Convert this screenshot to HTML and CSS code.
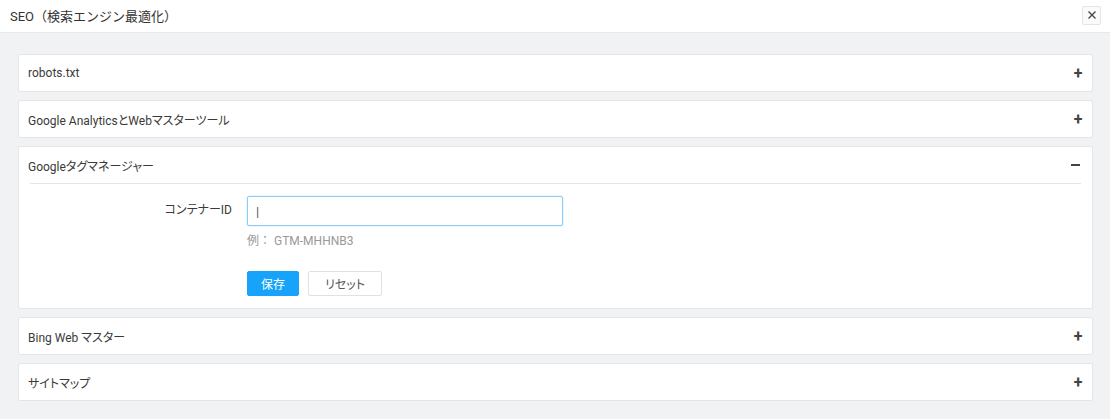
FILE: index.html
```html
<!DOCTYPE html>
<html>
<head>
  <title>SEO</title>
  <link rel="stylesheet" href="styles.css">
</head>
<body>

<div class="modal">
  <div class="modal-head">
    <span class="modal-title">SEO（検索エンジン最適化）</span>
    <button class="close-btn">
      <svg width="10" height="10" viewBox="0 0 10 10"><path d="M1.5 1.5L8.5 8.5M8.5 1.5L1.5 8.5" stroke="#444" stroke-width="1.3"/></svg>
    </button>
  </div>

  <div class="modal-body">
    <div class="panel">
      <div class="panel-head"><span>robots.txt</span><span class="toggle">+</span></div>
    </div>

    <div class="panel">
      <div class="panel-head"><span>Google AnalyticsとWebマスターツール</span><span class="toggle">+</span></div>
    </div>

    <div class="panel open">
      <div class="panel-head"><span>Googleタグマネージャー</span><span class="toggle minus"></span></div>
      <div class="panel-content">
        <div class="form-row">
          <label class="form-label">コンテナーID</label>
          <div class="form-field">
            <input type="text" class="text-input" value="|">
            <div class="hint">例： GTM-MHHNB3</div>
          </div>
        </div>
        <div class="actions">
          <button class="btn btn-primary">保存</button>
          <button class="btn btn-default">リセット</button>
        </div>
      </div>
    </div>

    <div class="panel">
      <div class="panel-head"><span>Bing Web マスター</span><span class="toggle">+</span></div>
    </div>

    <div class="panel">
      <div class="panel-head"><span>サイトマップ</span><span class="toggle">+</span></div>
    </div>
  </div>
</div>

</body>
</html>
```

FILE: styles.css
```css
body {
  margin: 0;
  background: #fff;
  color: #3a3a3a;
  font-family: Roboto, "Noto Sans CJK JP", sans-serif;
  font-size: 12px;
  font-feature-settings: "palt";
}

.modal {
  width: 1110px;
  height: 419px;
  display: flex;
  flex-direction: column;
}

.modal-head {
  height: 32px;
  display: flex;
  align-items: center;
  justify-content: space-between;
  padding: 0 9px 0 10px;
  border-bottom: 1px solid #e6e8eb;
}

.modal-title {
  font-size: 13px;
  color: #333;
  margin-top: -1px;
  font-feature-settings: normal;
}

.close-btn {
  width: 19px;
  height: 19px;
  padding: 0;
  border: 1px solid #e3e5e8;
  background: #fafafa;
  border-radius: 2px;
  display: flex;
  align-items: center;
  justify-content: center;
  margin-top: -2px;
}

.modal-body {
  flex: 1;
  background: #f1f2f4;
  padding: 21px 17px 0 18px;
  display: flex;
  flex-direction: column;
  gap: 8px;
}

.panel {
  background: #fff;
  border: 1px solid #e3e5e8;
  border-radius: 2px;
}

.panel-head {
  height: 36px;
  display: flex;
  align-items: center;
  justify-content: space-between;
  padding: 0 9px 0 9px;
}

.toggle {
  font-size: 16px;
  font-weight: bold;
  color: #444;
  width: 10px;
  text-align: center;
}

.toggle.minus {
  height: 2px;
  background: #444;
  width: 9px;
  margin-right: 1px;
}

.open .panel-head {
  border-bottom: 1px solid #e3e5e8;
  margin: 0 11px;
  padding: 0;
}

.open .panel-head span:first-child {
  margin-left: -2px;
}

.panel-content {
  padding: 12px 0 12px 0;
}

.form-row {
  display: flex;
  align-items: flex-start;
}

.form-label {
  width: 213px;
  text-align: right;
  padding-right: 15px;
  line-height: 30px;
  margin-top: -1px;
}

.text-input {
  width: 298px;
  height: 28px;
  padding: 0 8px;
  border: 1px solid #8ecbf5;
  border-radius: 2px;
  box-shadow: 0 0 2px rgba(64, 169, 255, 0.35);
  font-family: inherit;
  font-size: 13px;
  color: #555;
  outline: none;
}

.hint {
  color: #999;
  margin-top: 5px;
  font-feature-settings: normal;
}

.actions {
  display: flex;
  gap: 9px;
  padding-left: 228px;
  margin-top: 23px;
}

.btn {
  height: 25px;
  font-family: inherit;
  font-size: 12px;
  font-feature-settings: "palt";
  border-radius: 2px;
  cursor: pointer;
}

.btn-primary {
  width: 52px;
  background: #16a3f9;
  border: 1px solid #16a3f9;
  color: #fff;
}

.btn-default {
  width: 74px;
  background: #fff;
  border: 1px solid #dfe1e5;
  color: #555;
}
```
